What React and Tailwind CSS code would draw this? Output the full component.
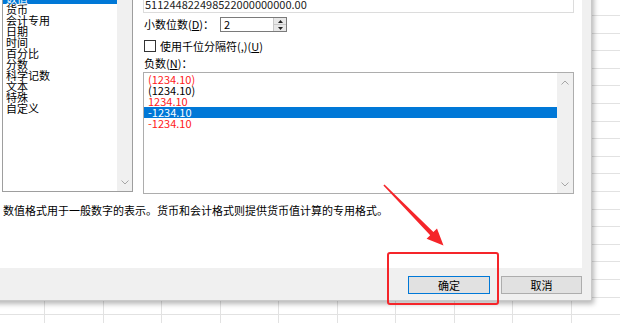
import React from 'react';

const FONT = "font-['Noto_Sans_CJK_SC','Noto_Sans',sans-serif]";

const CATEGORIES = ['数值', '货币', '会计专用', '日期', '时间', '百分比', '分数', '科学记数', '文本', '特殊', '自定义'];

const NEGATIVES = [
  { text: '(1234.10)', red: true },
  { text: '(1234.10)', red: false },
  { text: '1234.10', red: true },
  { text: '-1234.10', red: false, selected: true },
  { text: '-1234.10', red: true },
];

function Chevron({ up }) {
  return (
    <svg width="8" height="5" viewBox="0 0 8 5" className="block">
      <polyline
        points={up ? '0.5,4.5 4,1 7.5,4.5' : '0.5,0.5 4,4 7.5,0.5'}
        fill="none"
        stroke="#a6a6a6"
        strokeWidth="1"
      />
    </svg>
  );
}

function SheetGrid() {
  const rows = Array.from({ length: 20 });
  const cols = Array.from({ length: 12 });
  return (
    <div className="ml-[-13.5px] mt-[-1.6px] flex flex-col">
      {rows.map((_, r) => (
        <div key={r} className="flex">
          {cols.map((_, c) => (
            <div key={c} className="h-[17.6px] w-[58.5px] shrink-0 border-r border-b border-[#e2e2e2]" />
          ))}
        </div>
      ))}
    </div>
  );
}

function CategoryList() {
  return (
    <div className="flex h-[204px] w-[131px] shrink-0 border border-[#9e9e9e] bg-white">
      <div className="flex-1 pt-[4px]">
        {CATEGORIES.map((name, i) => (
          <div
            key={name}
            className={`h-[11px] pl-[3px] text-[11px] leading-[11px] ${i === 0 ? 'bg-[#0078d7] text-white' : 'text-black'}`}
          >
            {name}
          </div>
        ))}
      </div>
      <div className="flex w-[15px] flex-col items-center justify-end bg-[#f0f0f0] pb-[6px]">
        <Chevron />
      </div>
    </div>
  );
}

function NegativeList() {
  return (
    <div className="mt-[3px] flex h-[122px] border border-[#adadad] bg-white">
      <div className="flex-1 pt-[1px]">
        {NEGATIVES.map((item, i) => (
          <div
            key={i}
            className={`h-[11px] pl-[4px] text-[11px] leading-[11px] ${
              item.selected ? 'bg-[#0078d7] text-white' : item.red ? 'text-[#ff1a1a]' : 'text-black'
            }`}
          >
            {item.text}
          </div>
        ))}
      </div>
      <div className="flex w-[16px] flex-col items-center justify-between bg-[#f0f0f0] pt-[7px] pb-[6px]">
        <Chevron up />
        <Chevron />
      </div>
    </div>
  );
}

export default function App() {
  return (
    <div className={`relative h-[323px] w-[620px] overflow-hidden bg-white ${FONT}`}>
      <SheetGrid />

      {/* format cells dialog */}
      <div className="absolute left-[-8px] top-[-20px] flex h-[321px] w-[600px] flex-col border-r border-b border-[#c9c9c9] bg-[#f0f0f0] shadow-[2px_3px_5px_rgba(0,0,0,0.28)]">
        <div className="mr-[9px] h-[288px] bg-white pl-[10px] pt-[8px]">
          <div className="flex gap-[10px]">
            <CategoryList />

            <div className="flex w-[431px] flex-col">
              <div className="flex h-[25px] items-end border border-[#dcdcdc] pb-[2px] pl-[1px]">
                <span className="text-[11px] leading-[11px] text-[#222]">511244822498522000000000.00</span>
              </div>

              <div className="mt-[4px] flex h-[15px] items-center pl-[1px]">
                <span className="w-[76px] text-[11px] leading-[11px] text-black">
                  小数位数(<span className="underline">D</span>)：
                </span>
                <div className="flex h-[15px] w-[67px] border border-[#7a7a7a] bg-white">
                  <span className="flex-1 pl-[3px] text-[11px] leading-[13px] text-black">2</span>
                  <div className="flex w-[13px] flex-col border-l border-[#c8c8c8] bg-[#e8e8e8]">
                    <div className="flex flex-1 items-center justify-center border-b border-[#c8c8c8]">
                      <svg width="5" height="3" viewBox="0 0 5 3"><polygon points="0,3 2.5,0 5,3" fill="#222" /></svg>
                    </div>
                    <div className="flex flex-1 items-center justify-center">
                      <svg width="5" height="3" viewBox="0 0 5 3"><polygon points="0,0 2.5,3 5,0" fill="#222" /></svg>
                    </div>
                  </div>
                </div>
              </div>

              <div className="mt-[8px] flex h-[12px] items-center gap-[4px] pl-[1px]">
                <div className="h-[12px] w-[12px] border border-[#333] bg-white" />
                <span className="text-[11px] leading-[11px] text-black">
                  使用千位分隔符(,)(<span className="underline">U</span>)
                </span>
              </div>

              <div className="mt-[6px] h-[11px] pl-[1px] text-[11px] leading-[11px] text-black">
                负数(<span className="underline">N</span>)：
              </div>

              <NegativeList />
            </div>
          </div>

          <p className="mt-[11px] pl-[1px] text-[11px] leading-[11px] text-black">
            数值格式用于一般数字的表示。货币和会计格式则提供货币值计算的专用格式。
          </p>
        </div>

        <div className="flex flex-1 justify-end gap-[11px] pr-[9px] pt-[8px]">
          <button className="h-[18px] w-[82px] border border-[#0078d7] bg-[#e1e1e1] text-[11px] leading-[14px] text-black">
            确定
          </button>
          <button className="h-[18px] w-[81px] border border-[#adadad] bg-[#e1e1e1] text-[11px] leading-[14px] text-black">
            取消
          </button>
        </div>
      </div>

      {/* red annotation */}
      <div className="absolute left-[387px] top-[252px] h-[53px] w-[112px] rounded-[3px] border-[2.5px] border-[#f5252a]" />
      <svg className="absolute left-0 top-0" width="620" height="323" viewBox="0 0 620 323">
        <polygon
          points="384.5,184.5 433.4,232 437,228.4 443.5,245.5 426.6,238.8 430.2,235.2 383.4,185.6"
          fill="#f5252a"
        />
      </svg>
    </div>
  );
}
